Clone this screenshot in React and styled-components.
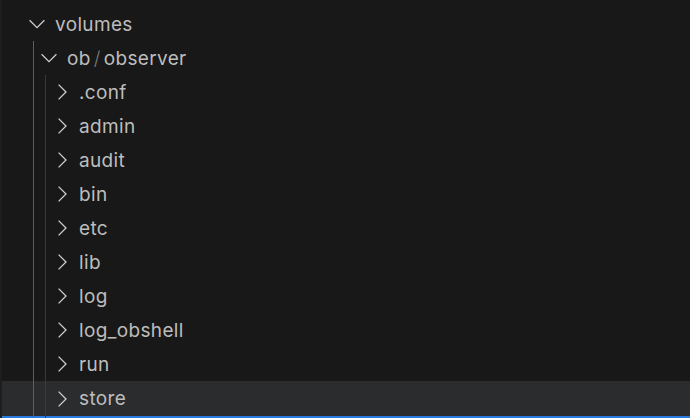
import React from 'react'
import styled, { createGlobalStyle } from 'styled-components'

const GlobalStyle = createGlobalStyle`
  html, body {
    margin: 0;
    padding: 0;
    background: #181818;
    overflow: hidden;
  }
`

const Panel = styled.div`
  width: 690px;
  height: 418px;
  box-sizing: border-box;
  padding-top: 7px;
  background: #181818;
  border-left: 2px solid #1e1e1e;
  display: flex;
  flex-direction: column;
  font-family: 'Inter', 'Noto Sans', sans-serif;
  font-size: 19px;
  color: #bdbdbd;
  overflow: hidden;
`

const Row = styled.div`
  height: ${({ $selected }) => ($selected ? '35px' : '34px')};
  display: flex;
  align-items: stretch;
  padding-left: 27px;
  background: ${({ $selected }) => ($selected ? '#2b2c2e' : 'transparent')};
  flex-shrink: 0;
`

const Indent = styled.div`
  width: 12px;
  flex-shrink: 0;
  position: relative;

  &::before {
    content: '';
    position: absolute;
    top: 0;
    bottom: ${({ $selected }) => ($selected ? '-2px' : '0')};
    left: 4px;
    width: 1px;
    background: ${({ $level }) => ($level === 1 ? '#5e5e5e' : '#3a3a3a')};
  }
`

const Twistie = styled.div`
  width: 16px;
  flex-shrink: 0;
  display: flex;
  align-items: center;
  justify-content: center;
  color: #cfcfcf;

  svg {
    display: block;
  }
`

const Label = styled.div`
  display: flex;
  align-items: center;
  margin-left: 10px;
  white-space: nowrap;
  letter-spacing: 0.35px;
`

const Sep = styled.span`
  color: #7c7c7c;
  margin: 0 3px;
  font-weight: 300;
`

const FocusLine = styled.div`
  height: 2px;
  background: #2a7be0;
  flex-shrink: 0;
`

const Chevron = ({ open }) =>
  open ? (
    <svg width="16" height="16" viewBox="0 0 16 16" fill="none">
      <polyline points="0.6,4.3 8,11.6 15.4,4.3" stroke="currentColor" strokeWidth="1.3" />
    </svg>
  ) : (
    <svg width="16" height="16" viewBox="0 0 16 16" fill="none">
      <polyline points="5.6,0.6 13,8 5.6,15.4" stroke="currentColor" strokeWidth="1.3" />
    </svg>
  )

const items = [
  { level: 0, open: true, name: 'volumes' },
  { level: 1, open: true, name: ['ob', 'observer'] },
  { level: 2, name: '.conf' },
  { level: 2, name: 'admin' },
  { level: 2, name: 'audit' },
  { level: 2, name: 'bin' },
  { level: 2, name: 'etc' },
  { level: 2, name: 'lib' },
  { level: 2, name: 'log' },
  { level: 2, name: 'log_obshell' },
  { level: 2, name: 'run' },
  { level: 2, name: 'store', selected: true },
]

const App = () => {
  return (
    <>
      <GlobalStyle />
      <Panel>
        {items.map((item, i) => (
          <Row key={i} $selected={item.selected}>
            {Array.from({ length: item.level }).map((_, k) => (
              <Indent key={k} $level={k + 1} $selected={item.selected} />
            ))}
            <Twistie>
              <Chevron open={item.open} />
            </Twistie>
            <Label>
              {Array.isArray(item.name) ? (
                <>
                  {item.name[0]}
                  <Sep>/</Sep>
                  {item.name[1]}
                </>
              ) : (
                item.name
              )}
            </Label>
          </Row>
        ))}
        <FocusLine />
      </Panel>
    </>
  )
}

export default App
